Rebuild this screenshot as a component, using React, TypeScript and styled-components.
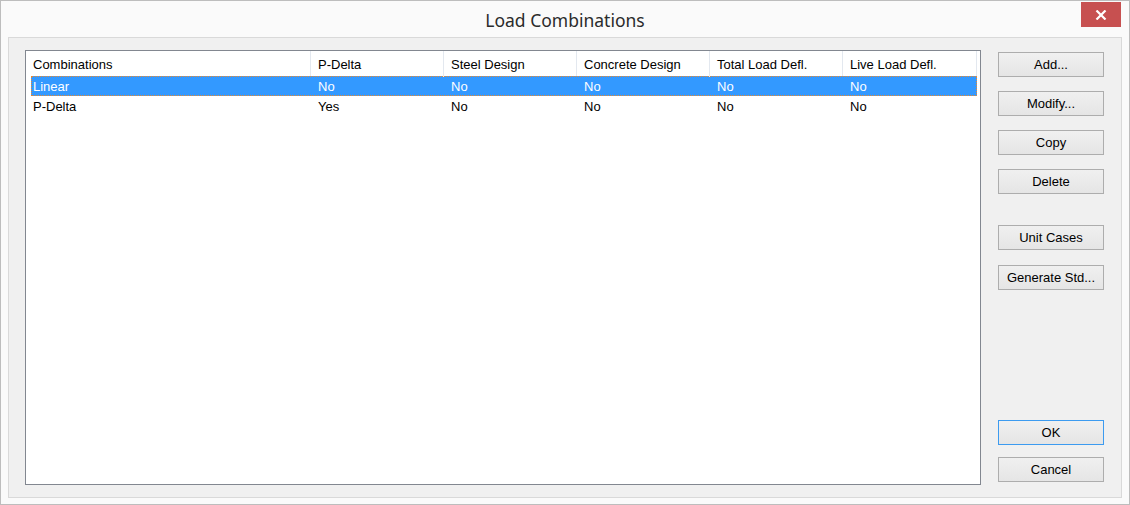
import React from 'react';
import styled, { createGlobalStyle } from 'styled-components';

const GlobalStyle = createGlobalStyle`
  html, body {
    margin: 0;
    padding: 0;
    background: #ffffff;
  }
  * { box-sizing: border-box; }
`;

const COLUMNS = ['Combinations', 'P-Delta', 'Steel Design', 'Concrete Design', 'Total Load Defl.', 'Live Load Defl.'];

const ROWS = [
  ['Linear', 'No', 'No', 'No', 'No', 'No'],
  ['P-Delta', 'Yes', 'No', 'No', 'No', 'No'],
];

const TOP_BUTTONS = ['Add...', 'Modify...', 'Copy', 'Delete'];
const MID_BUTTONS = ['Unit Cases', 'Generate Std...'];

// Outer dialog frame
const Window = styled.div`
  width: 1130px;
  height: 505px;
  display: flex;
  flex-direction: column;
  background: #fafafa;
  border: 1px solid #bdbdbd;
  font-family: 'Liberation Sans', Arial, sans-serif;
`;

const TitleBar = styled.div`
  height: 36px;
  display: grid;
  grid-template-columns: 1fr auto 1fr;
  align-items: start;
`;

const Title = styled.div`
  grid-column: 2;
  padding-top: 7px;
  font-family: 'Noto Sans', 'Open Sans', sans-serif;
  font-size: 17.5px;
  color: #2b2b2b;
`;

const CloseButton = styled.div`
  grid-column: 3;
  justify-self: end;
  margin: 1px 8px 0 0;
  width: 40px;
  height: 25px;
  background: #c75050;
  display: flex;
  align-items: center;
  justify-content: center;
`;

// Grey client area
const Client = styled.div`
  flex: 1;
  margin: 0 7px 6px 7px;
  border: 1px solid #d9d9d9;
  background: #f0f0f0;
  padding: 12px 17px 12px 16px;
  display: flex;
  gap: 17px;
`;

const ListBox = styled.div`
  width: 956px;
  border: 1px solid #828790;
  background: #ffffff;
  font-size: 13px;
  color: #000000;
`;

const HeaderRow = styled.div`
  display: grid;
  grid-template-columns: 285px 133px 133px 133px 133px 134px;
  height: 25px;
`;

const HeaderCell = styled.div`
  padding-left: 7px;
  padding-top: 1px;
  line-height: 25px;
  border-right: 1px solid #e3e8ef;
  white-space: nowrap;
`;

const Row = styled.div<{ selected?: boolean }>`
  display: grid;
  grid-template-columns: 280px 133px 133px 133px 133px 134px;
  margin-left: 5px;
  width: 946px;
  height: 20px;
  background: ${(p) => (p.selected ? '#3399ff' : 'transparent')};
  color: ${(p) => (p.selected ? '#ffffff' : '#000000')};
  outline: ${(p) => (p.selected ? '1px dotted #e9892f' : 'none')};
  outline-offset: -1px;
`;

const Cell = styled.div<{ first?: boolean }>`
  padding-left: ${(p) => (p.first ? '2px' : '7px')};
  padding-top: 1px;
  line-height: 20px;
  white-space: nowrap;
`;

const ButtonColumn = styled.div`
  width: 106px;
  display: flex;
  flex-direction: column;
`;

const ButtonGroup = styled.div<{ gap: number }>`
  display: flex;
  flex-direction: column;
  gap: ${(p) => p.gap}px;
`;

const Spacer = styled.div<{ h?: number }>`
  ${(p) => (p.h ? `height: ${p.h}px;` : 'flex: 1;')}
`;

const Button = styled.div<{ primary?: boolean }>`
  height: 25px;
  border: 1px solid ${(p) => (p.primary ? '#3c9bf0' : '#adadad')};
  background: linear-gradient(#f0f0f0, #e5e5e5);
  display: flex;
  align-items: center;
  justify-content: center;
  font-size: 13px;
  color: #000000;
`;

const CloseIcon = () => (
  <svg width="12" height="10" viewBox="0 0 12 10">
    <path d="M1.5 0.5 L10.5 9.5 M10.5 0.5 L1.5 9.5" stroke="#ffffff" strokeWidth="2.2" />
  </svg>
);

const App = (): JSX.Element => (
  <>
    <GlobalStyle />
    <Window>
      <TitleBar>
        <Title>Load Combinations</Title>
        <CloseButton><CloseIcon /></CloseButton>
      </TitleBar>
      <Client>
        <ListBox>
          <HeaderRow>
            {COLUMNS.map((c) => <HeaderCell key={c}>{c}</HeaderCell>)}
          </HeaderRow>
          {ROWS.map((r, i) => (
            <Row key={r[0]} selected={i === 0}>
              {r.map((v, j) => <Cell key={j} first={j === 0}>{v}</Cell>)}
            </Row>
          ))}
        </ListBox>
        <ButtonColumn>
          <Spacer h={2} />
          <ButtonGroup gap={14}>
            {TOP_BUTTONS.map((b) => <Button key={b}>{b}</Button>)}
          </ButtonGroup>
          <Spacer h={31} />
          <ButtonGroup gap={15}>
            {MID_BUTTONS.map((b) => <Button key={b}>{b}</Button>)}
          </ButtonGroup>
          <Spacer />
          <ButtonGroup gap={12}>
            <Button primary>OK</Button>
            <Button>Cancel</Button>
          </ButtonGroup>
          <Spacer h={3} />
        </ButtonColumn>
      </Client>
    </Window>
  </>
);

export default App;
